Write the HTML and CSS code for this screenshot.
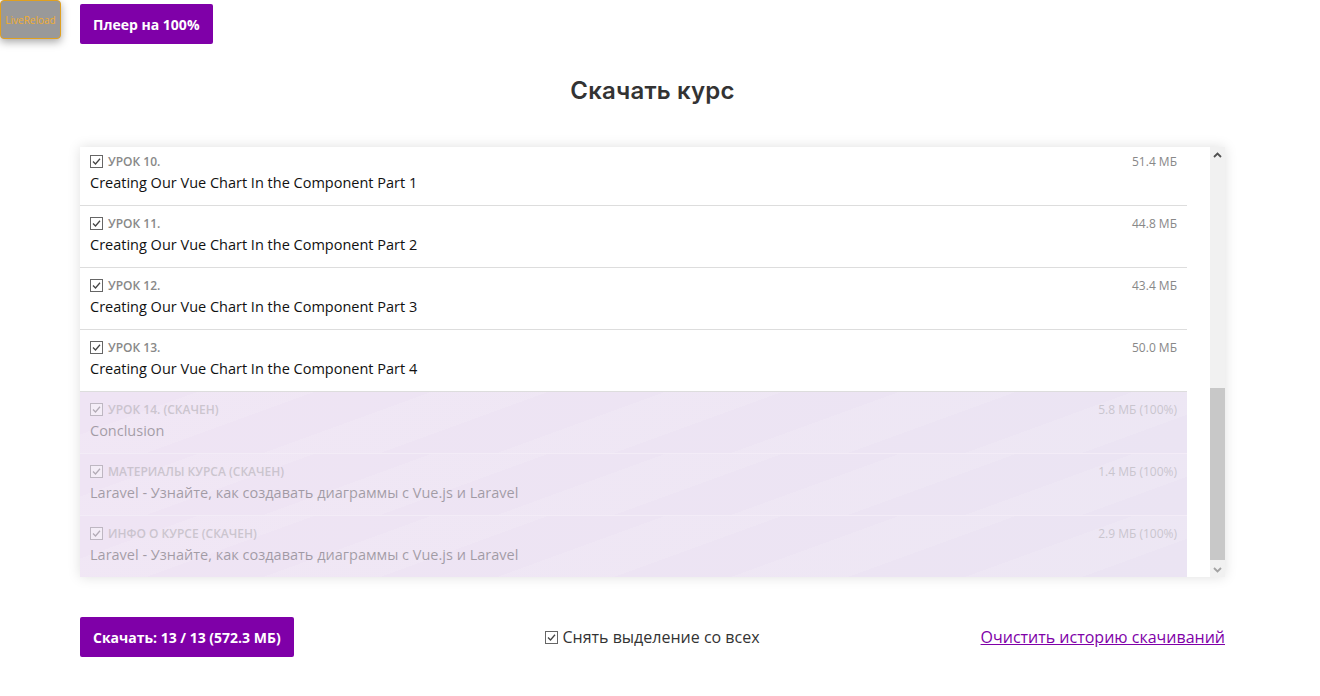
FILE: index.html
```html
<!DOCTYPE html>
<html lang="ru">
<head>
<meta charset="utf-8">
<title>Скачать курс</title>
<link rel="stylesheet" href="styles.css">
</head>
<body>
<div class="livereload">LiveReload</div>
<div class="page">
  <div class="top"><button class="btn">Плеер на 100%</button></div>
  <h1 class="title">Скачать курс</h1>
  <div class="box">
    <div class="list">
      <div class="row first">
        <div class="row-head"><span class="label"><svg class="cb" viewBox="0 0 13 13"><rect x="0.5" y="0.5" width="12" height="12" fill="#fff" stroke="#666"/><path d="M3 6.5 L5.5 9 L10 3.8" fill="none" stroke="#444" stroke-width="1.3"/></svg>УРОК 10.</span><span class="size">51.4 МБ</span></div>
        <div class="name">Creating Our Vue Chart In the Component Part 1</div>
      </div>
      <div class="row">
        <div class="row-head"><span class="label"><svg class="cb" viewBox="0 0 13 13"><rect x="0.5" y="0.5" width="12" height="12" fill="#fff" stroke="#666"/><path d="M3 6.5 L5.5 9 L10 3.8" fill="none" stroke="#444" stroke-width="1.3"/></svg>УРОК 11.</span><span class="size">44.8 МБ</span></div>
        <div class="name">Creating Our Vue Chart In the Component Part 2</div>
      </div>
      <div class="row">
        <div class="row-head"><span class="label"><svg class="cb" viewBox="0 0 13 13"><rect x="0.5" y="0.5" width="12" height="12" fill="#fff" stroke="#666"/><path d="M3 6.5 L5.5 9 L10 3.8" fill="none" stroke="#444" stroke-width="1.3"/></svg>УРОК 12.</span><span class="size">43.4 МБ</span></div>
        <div class="name">Creating Our Vue Chart In the Component Part 3</div>
      </div>
      <div class="row">
        <div class="row-head"><span class="label"><svg class="cb" viewBox="0 0 13 13"><rect x="0.5" y="0.5" width="12" height="12" fill="#fff" stroke="#666"/><path d="M3 6.5 L5.5 9 L10 3.8" fill="none" stroke="#444" stroke-width="1.3"/></svg>УРОК 13.</span><span class="size">50.0 МБ</span></div>
        <div class="name">Creating Our Vue Chart In the Component Part 4</div>
      </div>
      <div class="row done">
        <div class="fade">
          <div class="row-head"><span class="label"><svg class="cb" viewBox="0 0 13 13"><rect x="0.5" y="0.5" width="12" height="12" fill="#fff" stroke="#666"/><path d="M3 6.5 L5.5 9 L10 3.8" fill="none" stroke="#444" stroke-width="1.3"/></svg>УРОК 14. (СКАЧЕН)</span><span class="size">5.8 МБ (100%)</span></div>
          <div class="name">Conclusion</div>
        </div>
      </div>
      <div class="row done">
        <div class="fade">
          <div class="row-head"><span class="label"><svg class="cb" viewBox="0 0 13 13"><rect x="0.5" y="0.5" width="12" height="12" fill="#fff" stroke="#666"/><path d="M3 6.5 L5.5 9 L10 3.8" fill="none" stroke="#444" stroke-width="1.3"/></svg>МАТЕРИАЛЫ КУРСА (СКАЧЕН)</span><span class="size">1.4 МБ (100%)</span></div>
          <div class="name">Laravel - Узнайте, как создавать диаграммы с Vue.js и Laravel</div>
        </div>
      </div>
      <div class="row done">
        <div class="fade">
          <div class="row-head"><span class="label"><svg class="cb" viewBox="0 0 13 13"><rect x="0.5" y="0.5" width="12" height="12" fill="#fff" stroke="#666"/><path d="M3 6.5 L5.5 9 L10 3.8" fill="none" stroke="#444" stroke-width="1.3"/></svg>ИНФО О КУРСЕ (СКАЧЕН)</span><span class="size">2.9 МБ (100%)</span></div>
          <div class="name">Laravel - Узнайте, как создавать диаграммы с Vue.js и Laravel</div>
        </div>
      </div>
    </div>
    <div class="scrollbar">
      <div class="arrow"><svg viewBox="0 0 9 6" width="9" height="6"><path d="M1 5 L4.5 1.5 L8 5" fill="none" stroke="#505050" stroke-width="1.8"/></svg></div>
      <div class="track"><div class="thumb"></div></div>
      <div class="arrow"><svg viewBox="0 0 9 6" width="9" height="6"><path d="M1 1 L4.5 4.5 L8 1" fill="none" stroke="#a3a3a3" stroke-width="1.8"/></svg></div>
    </div>
  </div>
  <div class="footer">
    <div class="f-left"><button class="btn">Скачать: 13 / 13 (572.3 МБ)</button></div>
    <label class="deselect"><svg class="cb big" viewBox="0 0 13 13"><rect x="0.5" y="0.5" width="12" height="12" fill="#fff" stroke="#666"/><path d="M3 6.5 L5.5 9 L10 3.8" fill="none" stroke="#444" stroke-width="1.3"/></svg>Снять выделение со всех</label>
    <div class="f-right"><a class="clear" href="#">Очистить историю скачиваний</a></div>
  </div>
</div>
</body>
</html>
```
FILE: styles.css
```css
* { box-sizing: border-box; }
html, body { margin: 0; padding: 0; background: #fff; }
body { font-family: "Open Sans", "Liberation Sans", sans-serif; color: #111; }

.livereload {
  position: absolute; left: 0; top: 0;
  width: 61px; height: 39px;
  background: #999; border: 1px solid #e0a020; border-radius: 4px;
  color: #f2ad2e; font-size: 10px; display: flex; align-items: center; justify-content: center;
  box-shadow: 0 3px 8px rgba(0,0,0,0.35);
  z-index: 2;
}

.page { margin-left: 80px; width: 1145px; padding-top: 4px; }

.btn {
  background: #7f00a8; color: #fff; border: 0; border-radius: 2px;
  font-family: "Open Sans", sans-serif; font-weight: 700; font-size: 14px;
  height: 40px; padding: 0 13px; cursor: pointer;
}

.title {
  margin: 27px 0 0; height: 65px; text-align: center;
  font-family: "Inter", "Open Sans", sans-serif; font-weight: 600; font-size: 24px;
  color: #333; line-height: 40px; letter-spacing: 0.2px;
}

.box {
  margin-top: 11px; height: 430px; display: flex;
  box-shadow: 0 0 12px rgba(0,0,0,0.13);
  background: #fff;
}
.list { width: 1107px; overflow: hidden; }
.row {
  height: 62px; border-bottom: 1px solid #ddd; padding: 9px 10px 0 10px;
  background: #fff;
}
.row.first { margin-top: -3px; }
.row-head { display: flex; justify-content: space-between; align-items: center; height: 16px; }
.label { display: flex; align-items: center; font-size: 12px; font-weight: 600; color: #888; }
.cb { width: 13px; height: 13px; margin-right: 5px; flex: none; }
.size { font-size: 12px; color: #888; }
.name { font-size: 14.5px; line-height: 20px; margin-top: 4px; color: #111; }

.row.done {
  border-bottom: 1px solid #f3ecf7;
  background:
    repeating-linear-gradient(160deg, rgba(255,255,255,0) 0 40px, rgba(255,255,255,0.1) 40px 80px),
    linear-gradient(90deg, #efe4f4 0%, #ebe4f3 100%);
}
.row.done:last-child { border-bottom: 0; }
.fade { opacity: 0.35; }

.scrollbar { margin-left: 23px; width: 15px; display: flex; flex-direction: column; background: #f1f1f1; }
.arrow { height: 15px; display: flex; align-items: center; justify-content: center; }
.track { flex: 1; display: flex; flex-direction: column; justify-content: flex-end; padding-bottom: 2px; }
.thumb { height: 172px; background: #c8c8c8; }

.footer {
  margin-top: 40px; height: 40px;
  display: grid; grid-template-columns: 1fr auto 1fr; align-items: center;
}
.f-left { display: flex; }
.f-right { display: flex; justify-content: flex-end; }
.deselect { display: flex; align-items: center; font-size: 16px; color: #333; }
.cb.big { margin-right: 4px; }
.clear { font-size: 16px; color: #8000a8; text-decoration: underline; }
```
